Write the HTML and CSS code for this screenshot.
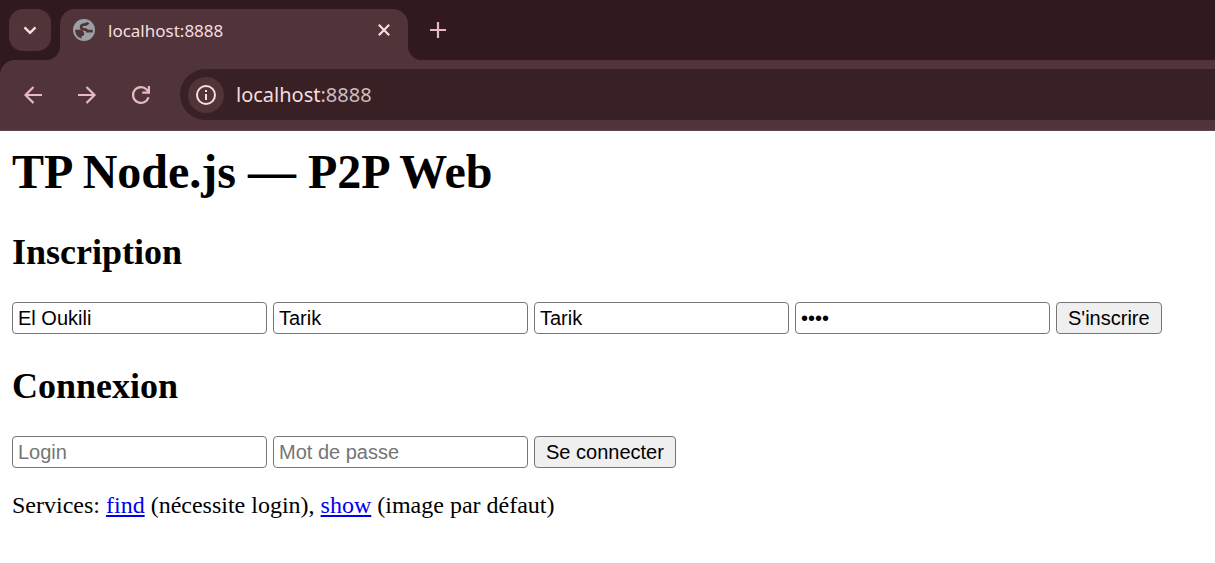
FILE: index.html
```html
<!DOCTYPE html>
<html lang="fr">
<head>
<meta charset="utf-8">
<title>TP Node.js — P2P Web</title>
<link rel="stylesheet" href="styles.css">
</head>
<body>
<header class="browser">
  <div class="tabstrip">
    <button class="tab-search" type="button" aria-label="Rechercher dans les onglets">
      <svg width="16" height="16" viewBox="0 0 16 16" fill="none" stroke="currentColor" stroke-width="2.4"><path d="M2.500 5.300 8 10.800l5.500-5.500"/></svg>
    </button>
    <div class="tab">
      <svg class="favicon" width="22" height="22" viewBox="0 0 22 22"><circle cx="11" cy="11" r="11" fill="#9aa0a6"/><path fill="none" stroke="#503439" stroke-width="2.800" d="M15 3.400C14.200 5.600 12.500 5.400 10.500 5.700 7.500 6.200 7.400 9.700 10 10.200c1.800.3 3.800 0 4.300 2h5.400"/><path fill="#503439" d="M2.100 10.800h4.700c2.600 0 4.400 1.700 4.400 4 0 1.500-.9 2.300-2.700 2.300v2.500C4.800 18.500 2.100 15.200 2.100 10.800z"/></svg>
      <span class="tab-title">localhost:8888</span>
      <button class="tab-close" type="button" aria-label="Fermer">
        <svg width="14" height="14" viewBox="0 0 14 14" fill="none" stroke="currentColor" stroke-width="2.200"><path d="m1.800 1.800 10.400 10.400m0-10.400L1.800 12.200"/></svg>
      </button>
    </div>
    <button class="new-tab" type="button" aria-label="Nouvel onglet">
      <svg width="16" height="16" viewBox="0 0 16 16" fill="none" stroke="currentColor" stroke-width="2.200"><path d="M8 0v16M0 8h16"/></svg>
    </button>
  </div>
  <nav class="toolbar">
    <button class="nav-button" type="button" aria-label="Retour">
      <svg width="20" height="20" viewBox="0 0 20 20" fill="none" stroke="currentColor" stroke-width="2.200"><path d="M19 10H2.500m8-8L2.500 10l8 8"/></svg>
    </button>
    <button class="nav-button" type="button" aria-label="Avancer">
      <svg width="20" height="20" viewBox="0 0 20 20" fill="none" stroke="currentColor" stroke-width="2.200"><path d="M1 10h16.500M9.500 2l8 8-8 8"/></svg>
    </button>
    <button class="nav-button" type="button" aria-label="Actualiser">
      <svg width="20" height="20" viewBox="0 0 20 20" fill="none" stroke="currentColor" stroke-width="2.200"><path d="M17.500 12.300A7.900 7.900 0 1 1 15.800 4.700L17.700 6.600M17.900 1v6.600h-6.600"/></svg>
    </button>
    <div class="omnibox">
      <button class="site-info" type="button" aria-label="Informations sur le site">
        <svg width="20" height="20" viewBox="0 0 20 20"><circle cx="10" cy="10" r="9" fill="none" stroke="currentColor" stroke-width="2"/><path fill="currentColor" d="M9 5h2v2H9zm0 4h2v6H9z"/></svg>
      </button>
      <div class="address">localhost<span class="port">:8888</span></div>
    </div>
  </nav>
</header>
<main class="page">
  <h1>TP Node.js — P2P Web</h1>
  <h2>Inscription</h2>
  <form class="form-row">
    <input class="field" type="text" aria-label="Nom" value="El Oukili">
    <input class="field" type="text" aria-label="Prénom" value="Tarik">
    <input class="field" type="text" aria-label="Login" value="Tarik">
    <input class="field" type="password" aria-label="Mot de passe" value="1234">
    <button class="submit" type="submit">S'inscrire</button>
  </form>
  <h2>Connexion</h2>
  <form class="form-row">
    <input class="field" type="text" aria-label="Login" placeholder="Login">
    <input class="field" type="password" aria-label="Mot de passe" placeholder="Mot de passe">
    <button class="submit" type="submit">Se connecter</button>
  </form>
  <p class="services">Services: <a href="#find">find</a> (nécessite login), <a href="#show">show</a> (image par défaut)</p>
</main>
</body>
</html>
```
FILE: styles.css
```css
* { box-sizing: border-box; }
body {
  margin: 0;
  background: #fff;
  color: #000;
  font: 24px/28px "Liberation Serif", "Times New Roman", serif;
}
svg { display: block; flex: none; }

.browser {
  background: #301a1f;
  color: #f5dde0;
  font-family: "Noto Sans", "Open Sans", sans-serif;
}
.browser button {
  display: flex;
  align-items: center;
  justify-content: center;
  padding: 0;
  border: 0;
  background: none;
  color: inherit;
}
.tabstrip {
  display: flex;
  height: 60px;
  padding: 9px 9px 0;
}
.browser .tab-search {
  width: 42px;
  height: 42px;
  border-radius: 14px;
  background: #503439;
}
.tab {
  position: relative;
  display: flex;
  align-items: center;
  width: 348px;
  margin-left: 9px;
  padding: 0 14px 9px 13px;
  border-radius: 15px 15px 0 0;
  background: #503439;
}
.tab::before,
.tab::after {
  content: "";
  position: absolute;
  bottom: 0;
  width: 15px;
  height: 15px;
}
.tab::before {
  right: 100%;
  background: radial-gradient(circle at 0 0, transparent 15px, #503439 16px);
}
.tab::after {
  left: 100%;
  background: radial-gradient(circle at 100% 0, transparent 15px, #503439 16px);
}
.tab-title {
  flex: 1;
  margin-left: 13px;
  padding-top: 2px;
  font-size: 17px;
  line-height: 24px;
}
.browser .tab-close { width: 20px; height: 20px; }
.browser .new-tab {
  width: 42px;
  height: 42px;
  margin-left: 9px;
  color: #e8b9c4;
}
.toolbar {
  display: flex;
  align-items: center;
  gap: 18px;
  height: 71px;
  padding: 0 0 1px 15px;
  border-bottom: 1px solid #61484c;
  border-radius: 15px 0 0 0;
  background: #503439;
}
.browser .nav-button {
  width: 36px;
  height: 36px;
  color: #e8b9c4;
}
.omnibox {
  display: flex;
  flex: 1;
  align-items: center;
  gap: 12px;
  height: 51px;
  margin-left: 3px;
  padding-left: 8px;
  border-radius: 26px 0 0 26px;
  background: #382025;
}
.browser .site-info {
  width: 36px;
  height: 36px;
  border-radius: 50%;
  background: #503439;
}
.address { font-size: 20px; line-height: 28px; }
.port { color: #d0bcbe; }

.page { padding: 13px 12px; }
h1 { margin: 0 0 32px; font-size: 48px; line-height: 56px; }
h2 { margin: 32px 0 30px; font-size: 36px; line-height: 40px; }
.form-row {
  display: flex;
  flex-wrap: wrap;
  gap: 6px;
}
.field,
.submit {
  height: 32px;
  border: 1px solid #767676;
  border-radius: 4px;
  font: 20px/24px "Liberation Sans", Arial, sans-serif;
  color: #000;
}
.field { width: 255px; padding: 0 5px; background: #fff; }
.field::placeholder { color: #757575; }
.submit { padding: 0 11px; background: #efefef; }
.services { margin: 23px 0 0; }
a { color: #0000ee; }
```
